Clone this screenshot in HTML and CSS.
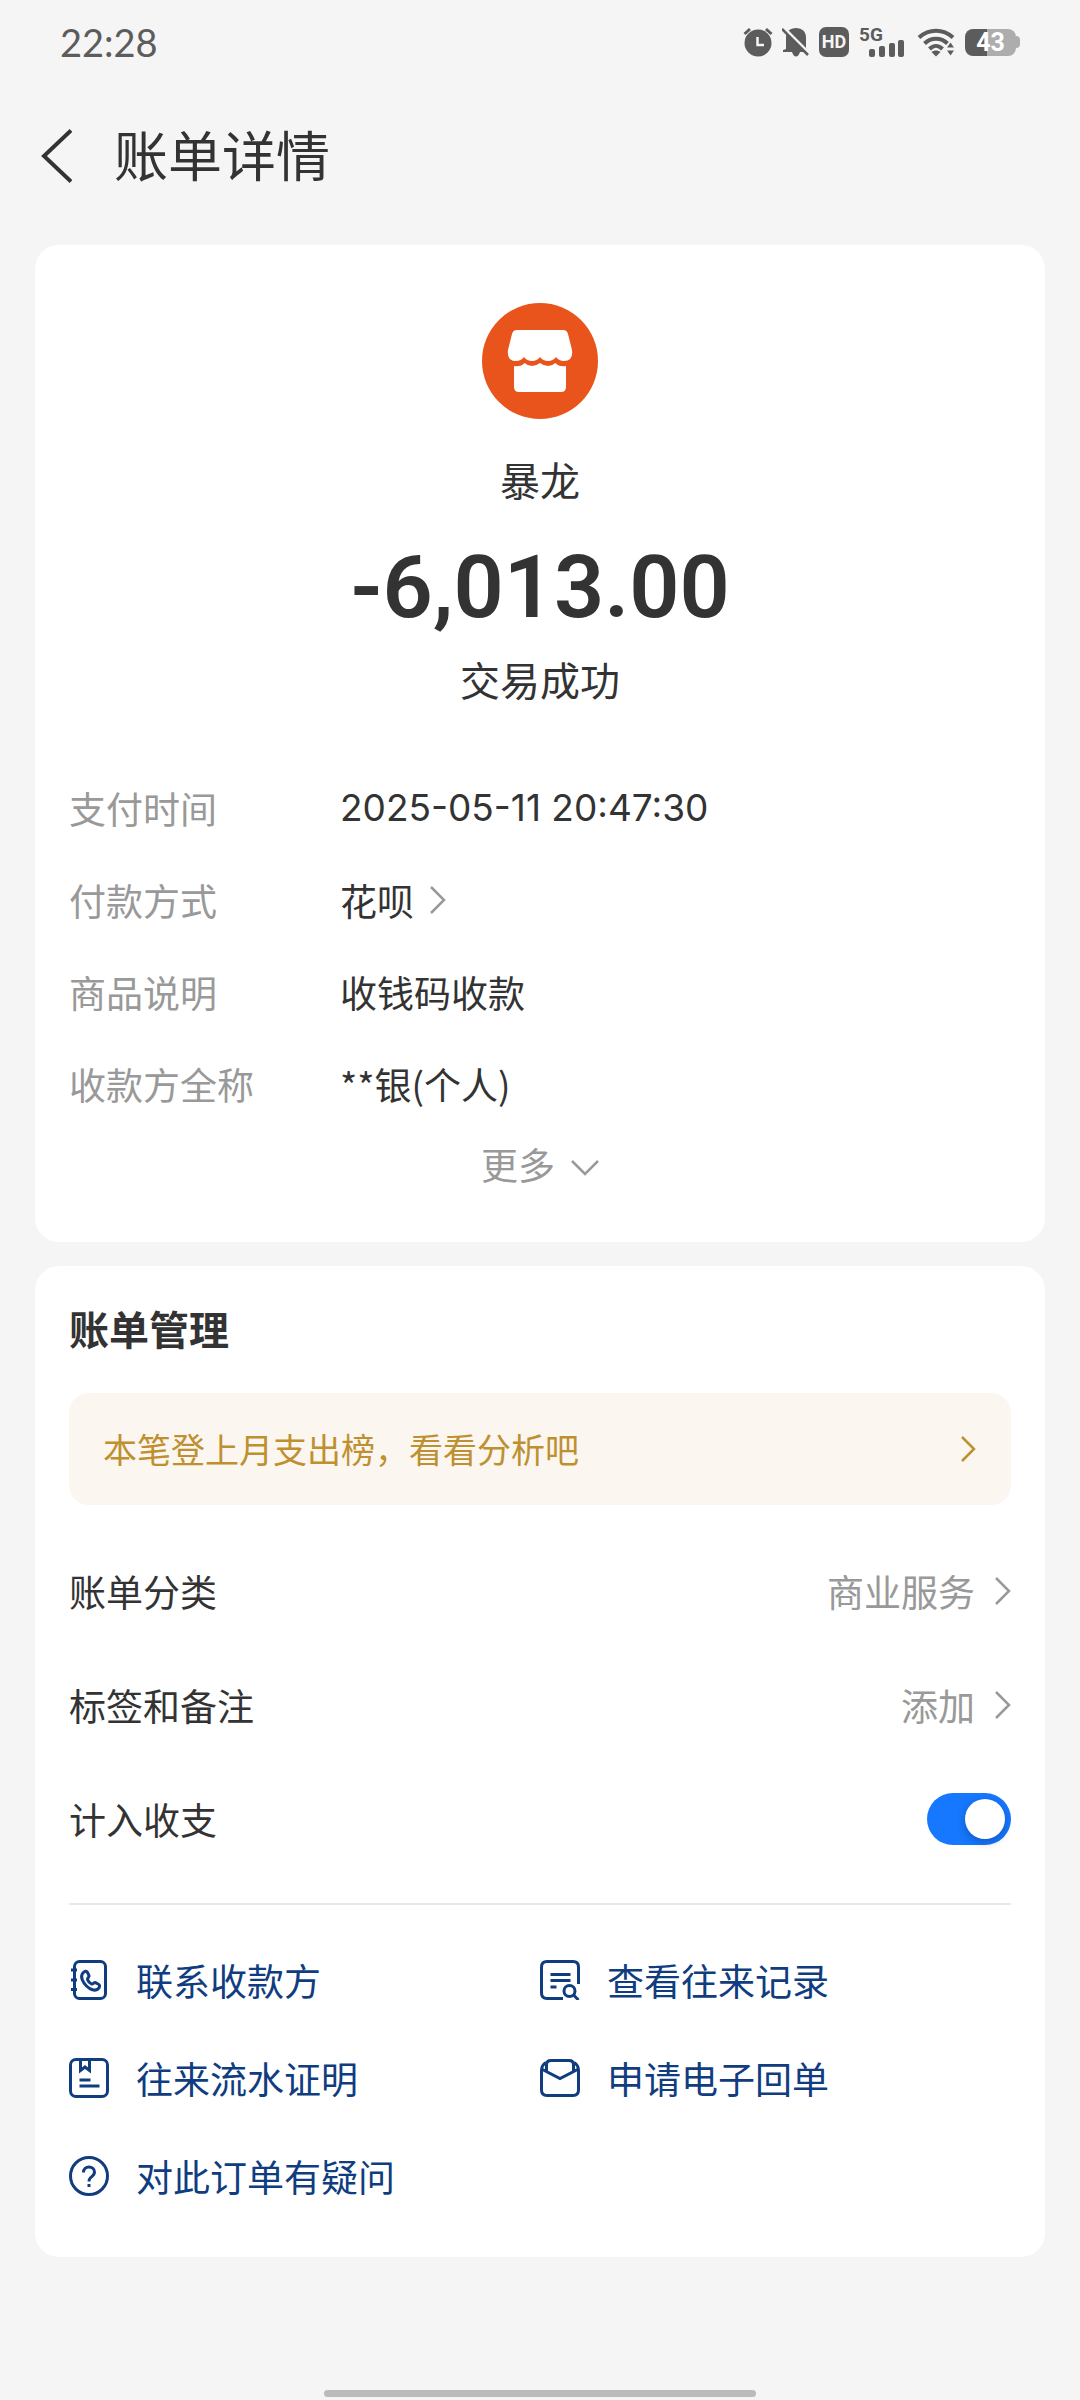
FILE: index.html
```html
<!DOCTYPE html>
<html lang="zh-CN">
<head>
<meta charset="utf-8">
<meta name="viewport" content="width=device-width, initial-scale=1">
<title>账单详情</title>
<link rel="stylesheet" href="styles.css">
</head>
<body>
<div class="page">
  <div class="status-bar">
    <time class="clock">22:28</time>
    <div class="status-icons">
      <svg class="i-alarm" width="30" height="30" viewBox="0 0 30 30" aria-label="闹钟"><circle cx="15" cy="16" r="13.5" fill="currentColor"/><path d="M1.500 7 7 2M28.500 7 23 2" stroke="currentColor" stroke-width="3"/><path d="M14.500 10v8h6.500" fill="none" stroke="#f5f5f5" stroke-width="2.500"/></svg>
      <svg class="i-bell" width="28" height="30" viewBox="0 0 28 30" aria-label="静音"><path d="M4 22V10.500C4 4.500 8 1 14 1s10 3.500 10 9.500V21l2 4H18c-1 3-2.500 4.500-4 4.500S11 28 10 25H1v-2z" fill="currentColor"/><path d="M2 1 28 27" stroke="#f5f5f5" stroke-width="3"/><path d="M0 2 26 28" stroke="currentColor" stroke-width="2.500"/></svg>
      <span class="hd">HD</span>
      <span class="signal">
        <span class="net">5G</span>
        <svg width="36" height="17" viewBox="0 0 36 17" fill="currentColor" aria-hidden="true"><rect x="0" y="9" width="6" height="8" rx="2"/><rect x="10" y="6" width="6" height="11" rx="2"/><rect x="20" y="3" width="6" height="14" rx="2"/><rect x="29" y="0" width="6" height="17" rx="2"/></svg>
      </span>
      <svg class="i-wifi" width="38" height="30" viewBox="0 0 38 30" aria-label="无线网络"><g fill="none" stroke="currentColor" stroke-width="4"><path d="M2 10.500C12 1.500 26 1.500 36 10.500"/><path d="M7.500 16.500c6.500-6.500 16.500-6.500 23 0"/><path d="M12.500 22c4-4 9-4 13 0"/></g><path d="M19 29.500l-4.500-4.500c2.500-2 6.500-2 9 0z" fill="currentColor"/><path d="M33.500 13l5.500 8.500-5.500 8.500-5.500-8.500z" fill="#f5f5f5"/><path d="M33.500 15.500l3.500 5h-7zM33.500 28.500l3.500-5h-7z" fill="currentColor"/></svg>
      <span class="battery"><span class="battery-level">43</span></span>
    </div>
  </div>

  <header class="nav">
    <button class="back" type="button" aria-label="返回"><svg width="32" height="54" viewBox="0 0 32 54" fill="none" stroke="currentColor" stroke-width="4"><path d="M31 1.500 4 27 31 52.500"/></svg></button>
    <h1 class="nav-title">账单详情</h1>
  </header>

  <main class="cards">
    <section class="card summary">
      <svg class="shop" width="116" height="116" viewBox="0 0 116 116" aria-hidden="true"><circle cx="58" cy="58" r="58" fill="#e9541d"/><path d="M35 27h46q4 0 5 4l4 16q1.500 11-8 11-5 0-8-4-3 4-8 4t-8-4q-3 4-8 4t-8-4q-3 4-8 4-9.500 0-8-11l4-16q1-4 5-4z" fill="#fff"/><path d="M32 63q7 1 10.500-3 3.500 3 7.500 3t8-3q4 3 8 3t7.500-3q3.500 4 10.500 3v21q0 5-5 5H37q-5 0-5-5z" fill="#fff"/></svg>
      <p class="payee">暴龙</p>
      <p class="amount">-6,013.00</p>
      <p class="state">交易成功</p>
      <dl class="details">
        <div class="detail"><dt>支付时间</dt><dd class="stamp">2025-05-11 20:47:30</dd></div>
        <div class="detail"><dt>付款方式</dt><dd><a class="method" href="#method">花呗<svg class="chevron" width="16" height="28" viewBox="0 0 16 28"><path d="M1 1l13 13L1 27"/></svg></a></dd></div>
        <div class="detail"><dt>商品说明</dt><dd>收钱码收款</dd></div>
        <div class="detail"><dt>收款方全称</dt><dd>**银(个人)</dd></div>
      </dl>
      <button class="more" type="button">更多<svg class="chevron" width="28" height="24" viewBox="0 0 28 24"><path d="M1 9l13 13L27 9"/></svg></button>
    </section>

    <section class="card manage">
      <h2 class="card-title">账单管理</h2>
      <a class="banner" href="#analysis">本笔登上月支出榜，看看分析吧<svg class="chevron" width="16" height="28" viewBox="0 0 16 28"><path d="M1 2l12 12L1 26"/></svg></a>
      <div class="settings">
        <a class="setting" href="#category"><span>账单分类</span><span class="setting-value">商业服务<svg class="chevron" width="16" height="28" viewBox="0 0 16 28"><path d="M1 1l13 13L1 27"/></svg></span></a>
        <a class="setting" href="#tags"><span>标签和备注</span><span class="setting-value">添加<svg class="chevron" width="16" height="28" viewBox="0 0 16 28"><path d="M1 1l13 13L1 27"/></svg></span></a>
        <label class="setting" for="count"><span>计入收支</span><input class="switch" id="count" type="checkbox" role="switch" checked></label>
      </div>
      <nav class="actions">
        <a class="action" href="#contact"><svg class="icon" viewBox="0 0 40 40"><rect x="5.500" y="1.500" width="31" height="37" rx="5"/><path d="M2 10h6M2 20h6M2 29.500h6"/><path d="M13.500 13.500c2-2.500 4-3 5-1l1.500 3c.8 1.500-2 2.500-1.500 4 .8 2.500 2 3.500 4 4.500 1.500.6 2.500-2 4-1.300l3 1.500c2 1.200 1 3.300-.5 4.800-3 2.500-8 .5-11.500-3s-6.500-9-4-12.500z"/></svg>联系收款方</a>
        <a class="action" href="#history"><svg class="icon" viewBox="0 0 40 40"><path d="M38.500 24V7q0-5.500-5.500-5.500H7Q1.500 1.500 1.500 7v26q0 5.500 5.500 5.500h16"/><path d="M10.500 14.500h20M10.500 20.500h20M10.500 27h6"/><circle cx="29.500" cy="31" r="5.500"/><path d="M33.500 35l5 5"/></svg>查看往来记录</a>
        <a class="action" href="#statement"><svg class="icon" viewBox="0 0 40 40"><rect x="1.500" y="1.500" width="37" height="37" rx="5.500"/><path d="M11.500 2v10.500l4.500-3.500 4.500 3.500V2M10.500 22h11M10.500 28h20"/></svg>往来流水证明</a>
        <a class="action" href="#receipt"><svg class="icon" viewBox="0 0 40 40"><path d="M6 4.500q-4.500 3-4.500 7.500V32q0 5.500 5.500 5.500h26q5.500 0 5.500-5.500V12q0-4.500-4.500-7.500"/><path d="M6.500 13V6.500Q6.500 2.500 11 2.500H29q4.500 0 4.500 4V13M1.500 11 20 20.500 38.500 11"/></svg>申请电子回单</a>
        <a class="action" href="#help"><svg class="icon" viewBox="0 0 40 40"><circle cx="20" cy="20" r="18.500"/><path d="M14.500 16.500c0-3.500 2.500-5.500 5.500-5.500s5.500 2 5.500 5-2 4-3.800 5.500Q20 23 20 25.500"/><path d="M20 28v3"/></svg>对此订单有疑问</a>
      </nav>
    </section>
  </main>
  <div class="home-bar"></div>
</div>
</body>
</html>
```
FILE: styles.css
```css
* {
  box-sizing: border-box;
}

body {
  margin: 0;
  background: #f5f5f5;
  color: #333;
  font-family: "Noto Sans CJK SC", sans-serif;
  font-size: 37px;
  line-height: 60px;
}

h1, h2, p, dl, dd {
  margin: 0;
}

a {
  color: inherit;
  text-decoration: none;
}

button {
  padding: 0;
  border: 0;
  background: none;
  color: inherit;
  font: inherit;
}

svg {
  display: block;
  flex: none;
}

.page {
  display: flex;
  flex-direction: column;
  min-height: 100vh;
}

/* System status bar */
.status-bar {
  display: flex;
  justify-content: space-between;
  align-items: center;
  height: 84px;
  padding: 0 60px;
  color: #5c5c5c;
}

.clock {
  font-family: Lato, sans-serif;
  font-size: 38px;
}

.status-icons {
  display: flex;
  align-items: center;
  gap: 9px;
}

.hd {
  width: 30px;
  height: 30px;
  border-radius: 7px;
  background: #5c5c5c;
  color: #f5f5f5;
  font: bold 18px/30px Roboto, sans-serif;
  text-align: center;
}

.signal {
  position: relative;
  display: flex;
  align-items: flex-end;
  justify-content: flex-end;
  width: 47px;
  height: 30px;
}

.net {
  position: absolute;
  top: -1px;
  left: 1px;
  font: bold 19px/18px Roboto, sans-serif;
}

.i-wifi {
  margin-left: 3px;
}

.battery {
  display: flex;
  align-items: center;
  margin-left: 1px;
}

.battery::after {
  content: "";
  width: 4px;
  height: 12px;
  border-radius: 0 4px 4px 0;
  background: #adadad;
}

.battery-level {
  width: 51px;
  height: 27px;
  border-radius: 8px;
  background: linear-gradient(to right, #5c5c5c 43%, #adadad 43%);
  color: #fff;
  font: bold 25px/28px Roboto, sans-serif;
  text-align: center;
}

/* Title bar */
.nav {
  display: flex;
  align-items: center;
  gap: 42px;
  height: 144px;
  padding: 0 40px;
}

.nav-title {
  padding-bottom: 4px;
  font-size: 54px;
  font-weight: 400;
  line-height: 80px;
}

/* Cards */
.cards {
  display: flex;
  flex-direction: column;
  gap: 24px;
  padding: 17px 35px 0;
}

.card {
  border-radius: 24px;
  background: #fff;
}

.summary {
  display: flex;
  flex-direction: column;
  align-items: center;
  padding: 58px 34px 48px;
}

.payee {
  margin-top: 30px;
  font-size: 40px;
}

.amount {
  margin-top: 28px;
  font: 600 88px/100px Roboto, sans-serif;
}

.state {
  margin-top: 12px;
  font-size: 40px;
}

.details {
  align-self: stretch;
  margin-top: 53px;
}

.detail {
  display: flex;
  align-items: center;
  height: 92px;
}

.detail dt {
  width: 271px;
  color: #999;
}

.stamp {
  font-family: Inter, sans-serif;
}

.method,
.more,
.setting-value {
  display: flex;
  align-items: center;
}

.method {
  gap: 16px;
}

.chevron {
  fill: none;
  stroke: #999;
  stroke-width: 2.5;
}

.more {
  gap: 16px;
  margin-top: 4px;
  color: #999;
}

.manage {
  padding: 32px 34px;
}

.card-title {
  font-size: 40px;
  font-weight: 700;
}

.banner {
  display: flex;
  align-items: center;
  justify-content: space-between;
  height: 112px;
  margin-top: 35px;
  padding: 0 34px;
  border-radius: 20px;
  background: #fbf7f0;
  color: #be9030;
  font-size: 34px;
}

.banner .chevron {
  stroke: #be9030;
}

.settings {
  margin-top: 29px;
  padding-bottom: 27px;
  border-bottom: 2px solid #e8e8e8;
}

.setting {
  display: flex;
  align-items: center;
  justify-content: space-between;
  height: 114px;
}

.setting-value {
  gap: 20px;
  color: #999;
}

.switch {
  appearance: none;
  width: 84px;
  height: 52px;
  margin: 0;
  padding: 6px;
  border-radius: 26px;
  background: #ccc;
}

.switch::before {
  content: "";
  display: block;
  width: 40px;
  height: 40px;
  border-radius: 50%;
  background: #fff;
  box-shadow: 0 3px 8px rgba(0, 0, 0, 0.25);
}

.switch:checked {
  background: #1677ff;
}

.switch:checked::before {
  margin-left: auto;
}

.actions {
  display: grid;
  grid-template-columns: 1fr 1fr;
  grid-auto-rows: 98px;
  margin-top: 26px;
  color: #103c80;
}

.action {
  display: flex;
  align-items: center;
  gap: 27px;
}

.icon {
  width: 40px;
  height: 40px;
  fill: none;
  stroke: currentColor;
  stroke-width: 3;
}

.home-bar {
  align-self: center;
  width: 40%;
  height: 7px;
  margin: auto 0 3px;
  border-radius: 4px;
  background: #bbb;
}
```
